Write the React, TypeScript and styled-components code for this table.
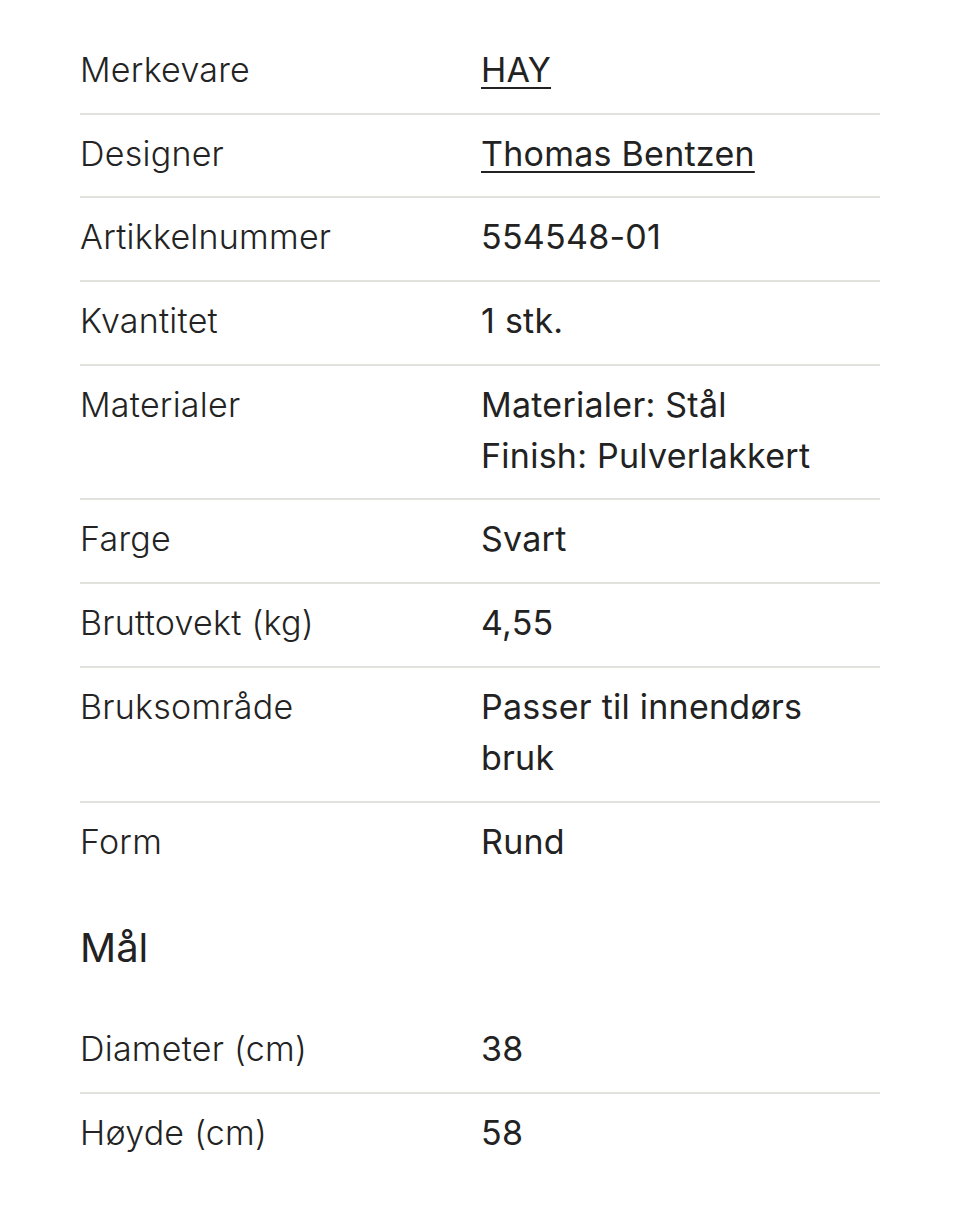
import React from "react";
import styled, { createGlobalStyle } from "styled-components";

const Global = createGlobalStyle`
  html, body { margin: 0; padding: 0; background: #ffffff; }
  body { font-family: Inter, "Noto Sans", sans-serif; color: #222222; }
`;

const Page = styled.div`
  padding: 31px 80px 40px 80px;
`;

const Table = styled.div`
  display: flex;
  flex-direction: column;
`;

const Row = styled.div<{ $last?: boolean }>`
  display: grid;
  grid-template-columns: 401px 1fr;
  padding: 13px 0 17.7px 0;
  border-bottom: ${(p) => (p.$last ? "none" : "2px solid #e1e1de")};
  font-size: 34px;
  line-height: 51px;
  letter-spacing: 0.25px;
`;

const Label = styled.div`
  font-weight: 300;
  color: #232323;
`;

const Value = styled.div`
  font-weight: 400;
  color: #222222;
`;

const Link = styled.a`
  color: #222222;
  text-decoration: underline;
  text-decoration-thickness: 2px;
  text-underline-offset: 5px;
`;

const Heading = styled.h2`
  margin: 40px 0 38px 0;
  font-size: 40px;
  line-height: 48px;
  font-weight: 400;
  color: #222222;
`;

type Item = { label: string; value: React.ReactNode };

const specs: Item[] = [
  { label: "Merkevare", value: <Link href="#">HAY</Link> },
  { label: "Designer", value: <Link href="#">Thomas Bentzen</Link> },
  { label: "Artikkelnummer", value: "554548-01" },
  { label: "Kvantitet", value: "1 stk." },
  {
    label: "Materialer",
    value: (
      <>
        Materialer: Stål
        <br />
        Finish: Pulverlakkert
      </>
    ),
  },
  { label: "Farge", value: "Svart" },
  { label: "Bruttovekt (kg)", value: "4,55" },
  { label: "Bruksområde", value: "Passer til innendørs bruk" },
  { label: "Form", value: "Rund" },
];

const dims: Item[] = [
  { label: "Diameter (cm)", value: "38" },
  { label: "Høyde (cm)", value: "58" },
];

const SpecTable = ({ items }: { items: Item[] }) => (
  <Table>
    {items.map((it, i) => (
      <Row key={it.label} $last={i === items.length - 1}>
        <Label>{it.label}</Label>
        <Value>{it.value}</Value>
      </Row>
    ))}
  </Table>
);

export default function App() {
  return (
    <>
      <Global />
      <Page>
        <SpecTable items={specs} />
        <Heading>Mål</Heading>
        <SpecTable items={dims} />
      </Page>
    </>
  );
}
